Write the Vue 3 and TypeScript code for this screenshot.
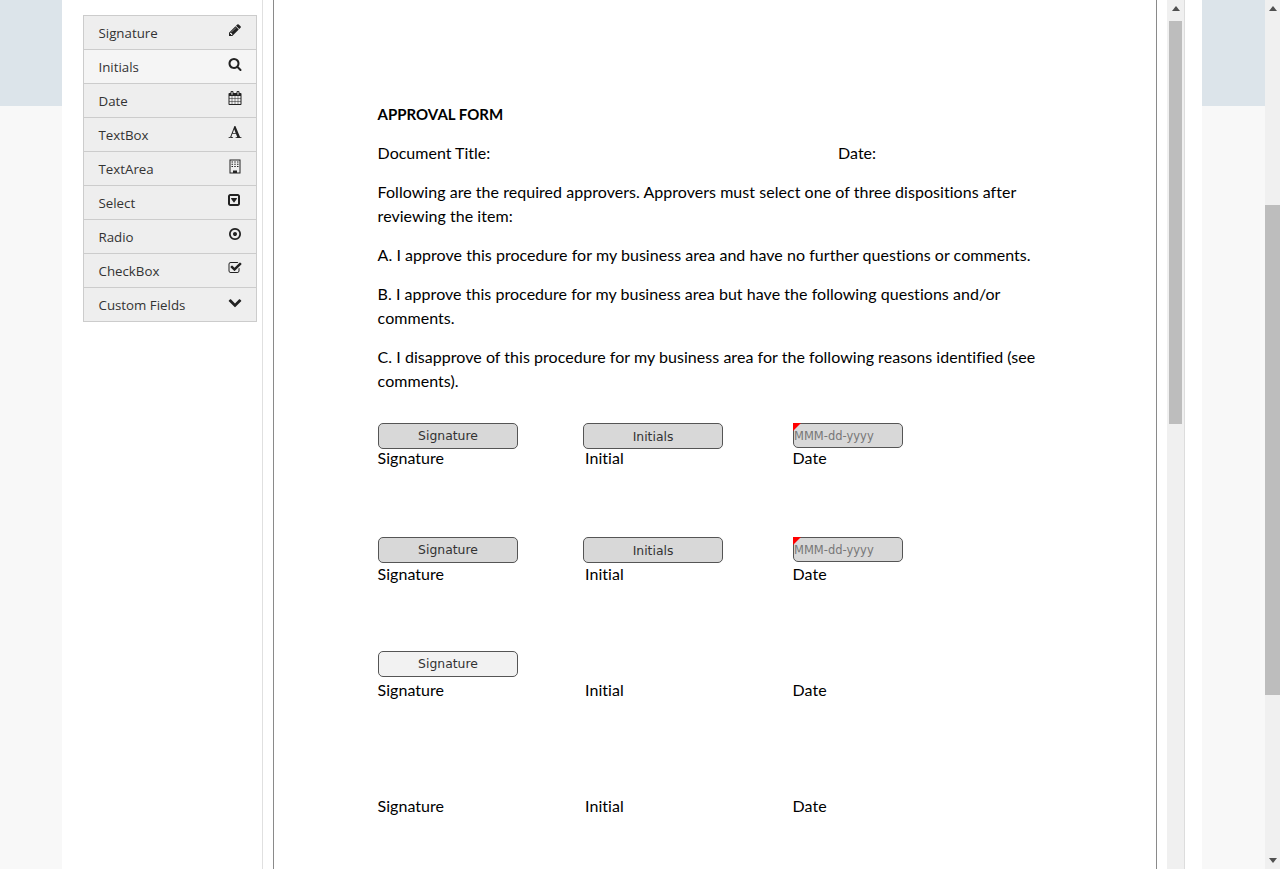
<script setup lang="ts">
interface ToolItem {
  label: string
  path: string
  tall?: boolean
}

const ICONS = {
  pencil:
    'M491 1536l91-91-235-235-91 91v107h128v128h107zm523-928q0-22-22-22-10 0-17 7l-542 542q-7 7-7 17 0 22 22 22 10 0 17-7l542-542q7-7 7-17zm-54-192l416 416-832 832h-416v-416zm683 96q0 53-37 90l-166 166-416-416 166-165q36-38 90-38 53 0 91 38l235 234q37 39 37 91z',
  search:
    'M1216 832q0-185-131.500-316.500t-316.500-131.500-316.500 131.500-131.500 316.500 131.500 316.500 316.500 131.500 316.500-131.500 131.500-316.500zm512 832q0 52-38 90t-90 38q-54 0-90-38l-343-342q-179 124-399 124-143 0-273.500-55.500t-225-150-150-225-55.500-273.500 55.500-273.500 150-225 225-150 273.500-55.500 273.500 55.500 225 150 150 225 55.500 273.500q0 220-124 399l343 343q37 37 37 90z',
  calendar:
    'M192 1664h288v-288h-288v288zm352 0h320v-288h-320v288zm-352-352h288v-320h-288v320zm352 0h320v-320h-320v320zm-352-384h288v-288h-288v288zm736 736h320v-288h-320v288zm-384-736h320v-288h-320v288zm768 736h288v-288h-288v288zm-384-352h320v-320h-320v320zm-352-864v-288q0-13-9.500-22.500t-22.500-9.500h-64q-13 0-22.500 9.500t-9.500 22.500v288q0 13 9.500 22.500t22.500 9.500h64q13 0 22.500-9.500t9.500-22.500zm736 864h288v-320h-288v320zm-384-384h320v-288h-320v288zm384 0h288v-288h-288v288zm32-480v-288q0-13-9.500-22.500t-22.500-9.500h-64q-13 0-22.500 9.500t-9.500 22.500v288q0 13 9.500 22.500t22.500 9.500h64q13 0 22.500-9.500t9.500-22.500zm384-64v1280q0 52-38 90t-90 38h-1408q-52 0-90-38t-38-90v-1280q0-52 38-90t90-38h128v-96q0-66 47-113t113-47h64q66 0 113 47t47 113v96h384v-96q0-66 47-113t113-47h64q66 0 113 47t47 113v96h128q52 0 90 38t38 90z',
  font: 'M789 559l-170 450q33 0 136.500 2t160.500 2q19 0 57-2-87-253-184-452zm-725 1105l2-79q23-7 56-12.500t57-10.500 49.500-14.500 44.500-29 31-50.500l237-616 280-724h128q8 14 11 21l205 480q33 78 106 257.500t114 274.500q15 34 58 144.500t72 168.500q20 45 35 57 19 15 88 29.500t84 20.500q6 38 6 57 0 5-.5 13.500t-.5 12.500q-63 0-190-8t-191-8q-76 0-215 7t-178 8q0-43 4-78l131-28q1 0 12.500-2.500t15.500-3.500 14.500-4.500 15-6.500 11-8 9-11 2.500-14q0-16-31-96.500t-72-177.500-42-100l-450-2q-26 58-76.500 195.500t-50.500 162.500q0 22 14 37.500t43.500 24.500 48.500 13.500 57 8.500 41 4q1 19 1 58 0 9-2 27-58 0-174.500-10t-174.500-10q-8 0-26.500 4t-21.500 4q-80 14-188 14z',
  // building-o: outline, rows of windows, door
  building:
    'M192 0h1408v1792h-1408zm128 128v1536h320v-256h512v256h320v-1536zm128 128h192v128h-192zm352 0h192v128h-192zm352 0h192v128h-192zm-704 288h192v128h-192zm352 0h192v128h-192zm352 0h192v128h-192zm-704 288h192v128h-192zm352 0h192v128h-192zm352 0h192v128h-192z',
  select:
    'M1145 675q18 35-5 66l-320 448q-19 27-52 27t-52-27l-320-448q-23-31-5-66 17-35 57-35h640q40 0 57 35zm135 701v-960q0-13-9.500-22.500t-22.500-9.500h-960q-13 0-22.500 9.500t-9.500 22.500v960q0 13 9.500 22.500t22.500 9.500h960q13 0 22.500-9.500t9.500-22.500zm256-960v960q0 119-84.500 203.500t-203.500 84.500h-960q-119 0-203.500-84.500t-84.500-203.500v-960q0-119 84.500-203.500t203.500-84.500h960q119 0 203.500 84.500t84.500 203.500z',
  radio:
    'M1152 896q0 106-75 181t-181 75-181-75-75-181 75-181 181-75 181 75 75 181zm-256-544q-148 0-273 73t-198 198-73 273 73 273 198 198 273 73 273-73 198-198 73-273-73-273-198-198-273-73zm768 544q0 209-103 385.500t-279.500 279.500-385.500 103-385.500-103-279.500-279.500-103-385.500 103-385.500 279.500-279.500 385.500-103 385.500 103 279.500 279.500 103 385.500z',
  check:
    'M1472 930v318q0 119-84.500 203.500t-203.500 84.500h-832q-119 0-203.500-84.500t-84.500-203.500v-832q0-119 84.500-203.500t203.500-84.500h832q63 0 117 25 15 7 18 23 3 17-9 29l-49 49q-10 10-23 10-3 0-9-2-23-6-45-6h-832q-66 0-113 47t-47 113v832q0 66 47 113t113 47h832q66 0 113-47t47-113v-254q0-13 9-22l64-64q10-10 23-10 6 0 12 3 20 8 20 29zm231-489l-814 814q-24 24-57 24t-57-24l-430-430q-24-24-24-57t24-57l110-110q24-24 57-24t57 24l263 263 647-647q24-24 57-24t57 24l110 110q24 24 24 57t-24 57z',
  chevron:
    'M1683 808l-742 741q-19 19-45 19t-45-19l-742-741q-19-19-19-45.500t19-45.500l166-165q19-19 45-19t45 19l531 531 531-531q19-19 45-19t45 19l166 165q19 19 19 45.500t-19 45.500z',
}

const tools: ToolItem[] = [
  { label: 'Signature', path: ICONS.pencil },
  { label: 'Initials', path: ICONS.search },
  { label: 'Date', path: ICONS.calendar },
  { label: 'TextBox', path: ICONS.font },
  { label: 'TextArea', path: ICONS.building, tall: true },
  { label: 'Select', path: ICONS.select },
  { label: 'Radio', path: ICONS.radio },
  { label: 'CheckBox', path: ICONS.check },
  { label: 'Custom Fields', path: ICONS.chevron },
]

// fields sit on the document page wherever they were dropped
const fields = [
  { kind: 'button', text: 'Signature', left: 104, top: 423, done: true },
  { kind: 'button field--low', text: 'Initials', left: 309, top: 423, done: true },
  { kind: 'date', text: 'MMM-dd-yyyy', left: 519, top: 423, done: true },
  { kind: 'button', text: 'Signature', left: 104, top: 537, done: true },
  { kind: 'button field--low', text: 'Initials', left: 309, top: 537, done: true },
  { kind: 'date', text: 'MMM-dd-yyyy', left: 519, top: 537, done: true },
  { kind: 'button', text: 'Signature', left: 104, top: 651, done: false },
]

const signRows = [0, 1, 2, 3]
</script>

<template>
  <div class="page">
    <div class="band"></div>
    <div class="shell">
      <aside class="side">
        <ul class="tools">
          <li
            v-for="(t, i) in tools"
            :key="t.label"
            class="tool"
            :class="{ 'tool--hover': i === 1 }"
          >
            <span>{{ t.label }}</span>
            <svg class="tool-icon" :class="{ 'tool-icon--tall': t.tall }" viewBox="0 0 1792 1792"><path :d="t.path" fill-rule="evenodd" /></svg>
          </li>
        </ul>
      </aside>

      <main class="viewer">
        <div class="doc">
          <p class="title">APPROVAL FORM</p>
          <p class="meta"><span class="meta-title">Document Title:</span><span>Date:</span></p>
          <p>Following are the required approvers. Approvers must select one of three dispositions after reviewing the item:</p>
          <p>A. I approve this procedure for my business area and have no further questions or comments.</p>
          <p>B. I approve this procedure for my business area but have the following questions and/or comments.</p>
          <p>C. I disapprove of this procedure for my business area for the following reasons identified (see comments).</p>
          <div class="sign-rows">
            <div v-for="r in signRows" :key="r" class="sign-row">
              <span>Signature</span>
              <span>Initial</span>
              <span>Date</span>
            </div>
          </div>
          <div
            v-for="(f, i) in fields"
            :key="i"
            class="field"
            :class="[`field--${f.kind}`, { 'field--open': !f.done }]"
            :style="{ left: f.left + 'px', top: f.top + 'px' }"
          >
            {{ f.text }}
          </div>
        </div>
        <div class="scroll scroll--inner">
          <span class="arrow arrow--up"></span>
          <div class="thumb thumb--inner"></div>
        </div>
      </main>
    </div>
    <div class="scroll scroll--page">
      <span class="arrow arrow--up"></span>
      <div class="thumb thumb--page"></div>
      <span class="arrow arrow--down"></span>
    </div>
  </div>
</template>

<style>
html,
body {
  margin: 0;
  height: 100%;
  overflow: hidden;
}
</style>

<style scoped>
.page {
  position: relative;
  display: flex;
  height: 869px;
  overflow: hidden;
  background: #f8f8f8;
}

.band {
  position: absolute;
  top: 0;
  left: 0;
  right: 0;
  height: 106px;
  background: #dce4ea;
}

.shell {
  position: relative;
  display: flex;
  width: 1140px;
  height: 100%;
  margin-left: 62px;
  background: #fff;
}

.side {
  flex: none;
  width: 201px;
  padding: 15px 5px 0 21px;
  box-sizing: border-box;
  border-right: 1px solid #e0e0e0;
}

.tools {
  margin: 0;
  padding: 0;
  list-style: none;
  border: 1px solid #ccc;
  border-bottom: 0;
}

.tool {
  display: flex;
  justify-content: space-between;
  height: 33px;
  padding: 0 14px 0 14.5px;
  border-bottom: 1px solid #ccc;
  background: #eee;
  color: #333;
  font: 13.3px/35px 'Open Sans', sans-serif;
}

.tool--hover {
  background: #f5f5f5;
}

.tool-icon {
  width: 14px;
  height: 14px;
  margin-top: 7px;
  fill: #222;
}

.tool-icon--tall {
  height: 15px;
}

.viewer {
  display: flex;
  flex: 1;
  min-width: 0;
  padding-left: 10px;
}

.doc {
  position: relative;
  flex: none;
  width: 884px;
  height: 100%;
  box-sizing: border-box;
  padding: 102px 120px 0 103.6px;
  border-left: 1px solid #8a8a8a;
  border-right: 1px solid #8a8a8a;
  color: #000;
  font: 16px/24px Lato, sans-serif;
  letter-spacing: 0.04px;
}

.doc p {
  margin: 0 0 15px;
}

.doc .title {
  margin-bottom: 14px;
  font-size: 15px;
  font-weight: 700;
  line-height: 25px;
  letter-spacing: 0;
}

.doc .meta {
  letter-spacing: 0;
}

.meta-title {
  display: inline-block;
  width: 460.5px;
}

.sign-rows {
  padding-top: 38px;
}

.sign-row {
  display: grid;
  grid-template-columns: 207.5px 207.5px 1fr;
  height: 116px;
}

.field {
  position: absolute;
  box-sizing: border-box;
  height: 26px;
  border: 1px solid #555;
  border-radius: 5px;
  background: #d8d8d8;
  color: #333;
  font: 12.4px/24px 'DejaVu Sans', sans-serif;
  letter-spacing: 0;
}

.field--button {
  width: 140px;
  text-align: center;
}

.field--low {
  line-height: 26px;
}

.field--open {
  background: #f2f2f2;
}

.field--date {
  width: 110px;
  height: 25px;
  color: #777;
  font-size: 11.5px;
}

.field--date::before {
  content: '';
  position: absolute;
  top: -1px;
  left: -1px;
  border-top: 8px solid #f00;
  border-right: 8px solid transparent;
}

.scroll {
  position: relative;
  flex: none;
  background: #f0f0f0;
}

.scroll--inner {
  width: 17px;
  height: 100%;
  margin-left: 10px;
  border-right: 1px solid #ddd;
}

.scroll--page {
  position: absolute;
  top: 0;
  right: 0;
  width: 15px;
  height: 100%;
}

.thumb {
  position: absolute;
  background: #bdbdbd;
}

.thumb--inner {
  top: 21px;
  left: 2px;
  width: 13px;
  height: 403px;
}

.thumb--page {
  top: 205px;
  left: 0;
  width: 15px;
  height: 490px;
}

.arrow {
  position: absolute;
  left: 50%;
  margin-left: -4px;
  border-left: 4px solid transparent;
  border-right: 4px solid transparent;
}

.arrow--up {
  top: 6px;
  border-bottom: 5px solid #505050;
}

.arrow--down {
  bottom: 6px;
  border-top: 5px solid #505050;
}
</style>
